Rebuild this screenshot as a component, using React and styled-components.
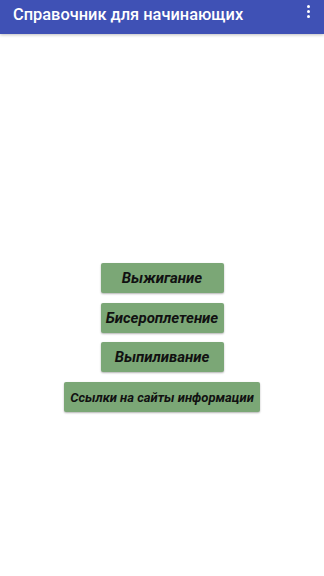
import { createGlobalStyle, styled } from "styled-components";

const GlobalStyle = createGlobalStyle`
  html, body {
    margin: 0;
    padding: 0;
    background: #fff;
    font-family: Roboto, "Noto Sans", sans-serif;
  }
`;

function App() {
  return (
    <>
      <GlobalStyle />
      <Screen>
        <Toolbar>
          <Title>Справочник для начинающих</Title>
          <Overflow aria-label="menu">
            <span />
            <span />
            <span />
          </Overflow>
        </Toolbar>
        <Content>
          <Button>Выжигание</Button>
          <Button>Бисероплетение</Button>
          <Button>Выпиливание</Button>
          <Button $wide>Ссылки на сайты информации</Button>
        </Content>
      </Screen>
    </>
  );
}

const Screen = styled.div`
  width: 324px;
  height: 576px;
  display: flex;
  flex-direction: column;
  background: #fff;
`;

const Toolbar = styled.div`
  height: 34px;
  flex-shrink: 0;
  background: #3f51b5;
  display: flex;
  align-items: center;
  justify-content: space-between;
  padding: 0 14px 0 13px;
  box-shadow: 0 1px 3px rgba(0, 0, 0, 0.25);
`;

const Title = styled.h1`
  margin: 0;
  color: #fff;
  font-size: 16.4px;
  font-weight: 500;
  margin-top: -6px;
`;

const Overflow = styled.div`
  display: flex;
  flex-direction: column;
  gap: 2px;
  margin-top: -12px;

  span {
    width: 3px;
    height: 3px;
    background: #fff;
    border-radius: 50%;
  }
`;

const Content = styled.div`
  display: flex;
  flex-direction: column;
  align-items: center;
  gap: 9.7px;
  padding-top: 229px;
`;

const Button = styled.button`
  width: ${(p) => (p.$wide ? "196px" : "123px")};
  height: 30px;
  border: none;
  border-radius: 2px;
  background: #7ba776;
  box-shadow: 0 1px 2px rgba(0, 0, 0, 0.3);
  color: #111;
  font-family: Roboto, "Noto Sans", sans-serif;
  font-style: italic;
  font-weight: 700;
  font-size: ${(p) => (p.$wide ? "13px" : "15px")};
  padding: 0;
`;

export default App;
